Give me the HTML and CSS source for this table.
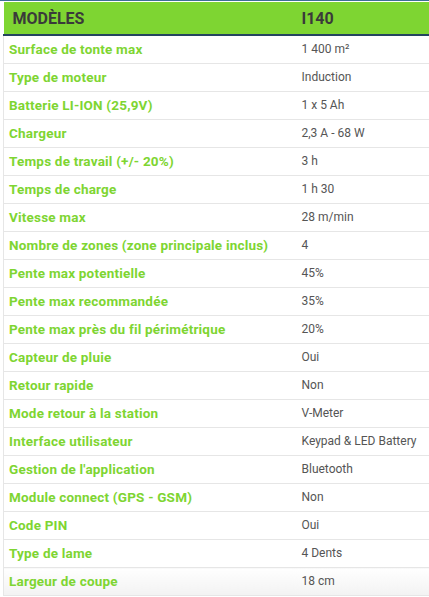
FILE: index.html
```html
<!DOCTYPE html>
<html lang="fr">
<head>
<meta charset="utf-8">
<link rel="stylesheet" href="styles.css">
</head>
<body>
<div class="topline"></div>
<table class="specs">
  <thead>
    <tr><th class="c1">MODÈLES</th><th class="c2">I140</th></tr>
  </thead>
  <tbody>
    <tr><td class="lab">Surface de tonte max</td><td class="val">1 400 m²</td></tr>
    <tr><td class="lab">Type de moteur</td><td class="val">Induction</td></tr>
    <tr><td class="lab">Batterie LI-ION (25,9V)</td><td class="val">1 x 5 Ah</td></tr>
    <tr><td class="lab">Chargeur</td><td class="val">2,3 A - 68 W</td></tr>
    <tr><td class="lab">Temps de travail (+/- 20%)</td><td class="val">3 h</td></tr>
    <tr><td class="lab">Temps de charge</td><td class="val">1 h 30</td></tr>
    <tr><td class="lab">Vitesse max</td><td class="val">28 m/min</td></tr>
    <tr><td class="lab">Nombre de zones (zone principale inclus)</td><td class="val">4</td></tr>
    <tr><td class="lab">Pente max potentielle</td><td class="val">45%</td></tr>
    <tr><td class="lab">Pente max recommandée</td><td class="val">35%</td></tr>
    <tr><td class="lab">Pente max près du fil périmétrique</td><td class="val">20%</td></tr>
    <tr><td class="lab">Capteur de pluie</td><td class="val">Oui</td></tr>
    <tr><td class="lab">Retour rapide</td><td class="val">Non</td></tr>
    <tr><td class="lab">Mode retour à la station</td><td class="val">V-Meter</td></tr>
    <tr><td class="lab">Interface utilisateur</td><td class="val">Keypad &amp; LED Battery</td></tr>
    <tr><td class="lab">Gestion de l'application</td><td class="val">Bluetooth</td></tr>
    <tr><td class="lab">Module connect (GPS - GSM)</td><td class="val">Non</td></tr>
    <tr><td class="lab">Code PIN</td><td class="val">Oui</td></tr>
    <tr><td class="lab">Type de lame</td><td class="val">4 Dents</td></tr>
    <tr class="last"><td class="lab">Largeur de coupe</td><td class="val">18 cm</td></tr>
  </tbody>
</table>
</body>
</html>
```
FILE: styles.css
```css
html, body {
  margin: 0;
  padding: 0;
  background: #ffffff;
  overflow: hidden;
}
body {
  font-family: Roboto, "Liberation Sans", sans-serif;
  width: 429px;
}
.topline {
  height: 1px;
  background: #3d6f96;
  margin-bottom: 1px;
}
.specs {
  margin-left: 3px;
  width: 426px;
  border-collapse: collapse;
  table-layout: fixed;
}
.specs th {
  background: #7ed532;
  color: #3a3a3a;
  font-weight: 700;
  font-size: 16px;
  text-align: left;
  height: 32px;
  padding: 0;
  border-bottom: 2px solid #24445f;
  vertical-align: middle;
}
.specs th.c1 {
  width: 279px;
  padding-left: 9px;
}
.specs th.c2 {
  padding-left: 10px;
}
.specs td {
  height: 26px;
  padding: 0 0 1px 0;
  border-bottom: 1px solid #e6e6e6;
  font-size: 12px;
  vertical-align: middle;
  white-space: nowrap;
}
.specs td.lab {
  color: #7ed532;
  font-weight: 700;
  font-size: 13.5px;
  letter-spacing: 0.2px;
  padding-left: 5px;
  border-left: 1px solid #e6e6e6;
}
.specs td.val {
  color: #555555;
  padding-left: 10px;
}
.specs tr.last td {
  background: linear-gradient(#ffffff, #f2f2f2);
}
```
